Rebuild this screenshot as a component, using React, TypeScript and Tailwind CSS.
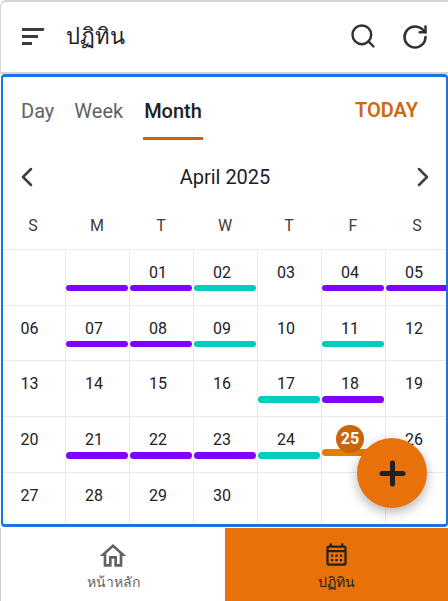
import React from "react";
import { ChevronLeft, ChevronRight, RotateCw, Search } from "lucide-react";

type Bar = "p" | "t" | "o" | null;
const rows: [string, Bar][][] = [
  [["", null], ["", "p"], ["01", "p"], ["02", "t"], ["03", null], ["04", "p"], ["05", "p"]],
  [["06", null], ["07", "p"], ["08", "p"], ["09", "t"], ["10", null], ["11", "t"], ["12", null]],
  [["13", null], ["14", null], ["15", null], ["16", null], ["17", "t"], ["18", "p"], ["19", null]],
  [["20", null], ["21", "p"], ["22", "p"], ["23", "p"], ["24", "t"], ["25", "o"], ["26", null]],
  [["27", null], ["28", null], ["29", null], ["30", null], ["", null], ["", null], ["", null]],
];
const days = ["S", "M", "T", "W", "T", "F", "S"];

function DayCell({ label, bar, col, thick }: { label: string; bar: Bar; col: number; thick: boolean }) {
  const height = thick ? "h-[7px]" : "h-[6px]";
  return (
    <div className={col === 0 ? "border-t border-[#e8e8ee] pt-[11px]" : "border-t border-l border-[#e8e8ee] pt-[11px]"}>
      <div className="h-[24px] pr-[7px] text-center text-[16px] leading-[24px] text-[#202124]">
        {label === "25" ? (
          <span className="relative z-10 mx-auto -mt-[3px] flex h-[28px] w-[28px] items-center justify-center rounded-full bg-[#cc6408] text-[16px] font-bold text-white">
            25
          </span>
        ) : (
          label
        )}
      </div>
      {bar === "p" && <div className={`mr-px rounded-full bg-[#7f00ff] ${height}`} />}
      {bar === "t" && <div className={`mr-px rounded-full bg-[#00cdbd] ${height}`} />}
      {bar === "o" && <div className={`mr-px rounded-full bg-[#e08000] ${height}`} />}
    </div>
  );
}

export default function App() {
  return (
    <div className="relative flex h-[601px] w-[448px] flex-col overflow-hidden bg-white font-['Roboto',sans-serif]">
      <header className="box-border flex h-[74px] shrink-0 items-center rounded-tl-[6px] border-t-2 border-b-2 border-l border-[#d4d4d4]">
        <svg width="24" height="20" viewBox="0 0 24 20" className="ml-[21px]" fill="#3c3c3c">
          <path d="M0 1h22.5L21.5 4H0z" />
          <rect x="0" y="8" width="16" height="3" />
          <rect x="0" y="15" width="10" height="3" />
        </svg>
        <h1 className="ml-[20px] text-[22px] leading-[32px] font-normal text-[#202124]">ปฏิทิน</h1>
        <Search size={28} strokeWidth={2.1} className="-mt-[2px] ml-auto text-[#333333]" />
        <RotateCw size={28} strokeWidth={2.2} className="mr-[19px] ml-[24px] text-[#333333]" />
      </header>

      <main className="ml-px box-border h-[453px] shrink-0 overflow-hidden rounded-[4px] border-x-2 border-y-[3px] border-[#1a73e8]">
        <div className="flex h-[63px] items-end pr-[28px] pl-[18px] text-[20px] leading-[24px]">
          <button className="mr-[20px] pb-[17px] text-[#5f6368]">Day</button>
          <button className="mr-[20px] pb-[17px] text-[#5f6368]">Week</button>
          <button className="border-b-[3px] border-[#c9640a] px-px pb-[14px] font-medium text-[#202124]">Month</button>
          <button className="mb-[18px] ml-auto font-semibold text-[#cc6a10]">TODAY</button>
        </div>

        <div className="flex h-[63px] items-center justify-between pt-[10px] pr-[7px] pl-[8px]">
          <ChevronLeft size={32} strokeWidth={1.9} className="text-[#3c4043]" />
          <span className="text-[20px] text-[#202124]">April 2025</span>
          <ChevronRight size={32} strokeWidth={1.9} className="text-[#3c4043]" />
        </div>

        <div className="-ml-[2px] w-[448px]">
          <div className="grid h-[46px] grid-cols-7">
            {days.map((d, i) => (
              <div key={i} className="flex items-center justify-center text-[16px] text-[#3c4043]">
                {d}
              </div>
            ))}
          </div>
          <div className="grid h-[280px] grid-cols-7 grid-rows-[56px_55px_56px_56px_57px]">
            {rows.flatMap((row, r) =>
              row.map(([label, bar], c) => (
                <DayCell key={`${r}-${c}`} label={label} bar={bar} col={c} thick={r === 2 || r === 3} />
              ))
            )}
          </div>
        </div>
      </main>

      <nav className="mt-px flex min-h-0 flex-1">
        <button className="flex w-[225px] flex-col items-center border-l border-[#cfcfcf] bg-white pt-[12px] text-[14px] leading-[20px] text-[#5f6368]">
          <svg width="32" height="32" viewBox="0 0 24 24" fill="#5f6368">
            <path d="M12 5.69l5 4.5V18h-2v-6H9v6H7v-7.81l5-4.5M12 3L2 12h3v8h6v-6h2v6h6v-8h3L12 3z" />
          </svg>
          <span>หน้าหลัก</span>
        </button>
        <button className="flex flex-1 flex-col items-center bg-[#e8710a] pt-[13px] text-[14px] leading-[20px] text-[#202124]">
          <svg width="27" height="27" viewBox="0 0 24 24" fill="#222222">
            <path d="M19 4h-1V2h-2v2H8V2H6v2H5c-1.11 0-1.99.9-1.99 2L3 20c0 1.1.89 2 2 2h14c1.1 0 2-.9 2-2V6c0-1.1-.9-2-2-2zm0 16H5V10h14v10zm0-12H5V6h14v2zM9 14H7v-2h2v2zm4 0h-2v-2h2v2zm4 0h-2v-2h2v2zm-8 4H7v-2h2v2zm4 0h-2v-2h2v2zm4 0h-2v-2h2v2z" />
          </svg>
          <span className="mt-[4px]">ปฏิทิน</span>
        </button>
      </nav>

      <button className="absolute right-[21px] bottom-[93px] z-20 flex h-[70px] w-[70px] items-center justify-center rounded-full bg-[#e8710a] shadow-[0_4px_12px_rgba(0,0,0,0.3)]">
        <svg width="27" height="27" viewBox="0 0 27 27" stroke="#202124" strokeWidth="5" strokeLinecap="round">
          <path d="M3 13.5h21M13.5 3v21" />
        </svg>
      </button>
    </div>
  );
}
